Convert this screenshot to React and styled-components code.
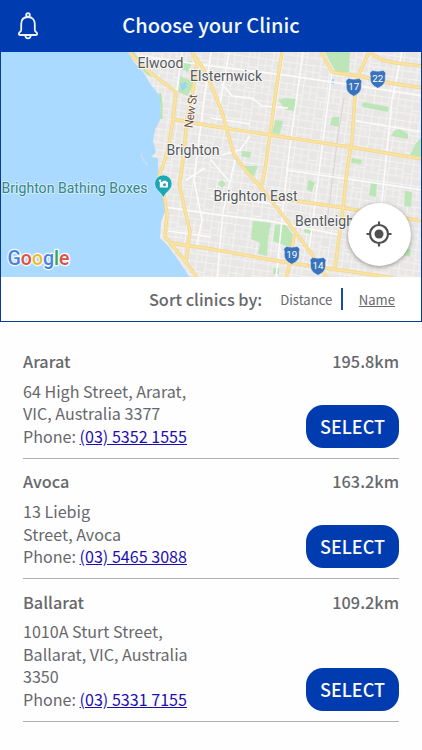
import styled, { createGlobalStyle } from 'styled-components';

const GlobalStyle = createGlobalStyle`
  body {
    background: #fefefe;
    margin: 0;
  }
  * {
    box-sizing: border-box;
  }
`;

const Page = styled.div`
  color: #67686c;
  display: flex;
  flex-direction: column;
  font-family: 'Noto Sans CJK SC', 'Noto Sans', sans-serif;
  height: 750px;
  overflow: hidden;
  width: 422px;
`;

const HeaderBar = styled.header`
  align-items: center;
  background: #003cb0;
  display: grid;
  flex: none;
  grid-template-columns: 55px 1fr 55px;
  height: 52px;
`;

const BellButton = styled.button`
  background: none;
  border: 0;
  color: #eef4ff;
  display: flex;
  justify-content: center;
  padding: 0;
`;

const Title = styled.h1`
  color: #f4f8ff;
  font-size: 20.1px;
  font-weight: 500;
  line-height: 50px;
  margin: 0;
  padding-bottom: 2px;
  text-align: center;
  white-space: nowrap;
`;

const MapPanel = styled.section`
  border: 1px solid #0a3a9c;
  border-top: 0;
  flex: none;
  height: 270px;
`;

const MapArea = styled.div`
  height: 225px;
  position: relative;
`;

const MapSvg = styled.svg`
  display: block;
  font-family: Roboto, sans-serif;
`;

const Label = styled.text`
  fill: ${({ $color }) => $color || '#55585b'};
  font-size: ${({ $size }) => $size || 14}px;
  paint-order: stroke;
  stroke: ${({ $halo }) => $halo || '#f8f8f8'};
  stroke-linejoin: round;
  stroke-width: 1.8px;
`;

const LocateButton = styled.button`
  align-items: center;
  background: #fff;
  border: 0;
  border-radius: 50%;
  bottom: 11px;
  box-shadow: 0 1px 4px rgba(0, 0, 0, 0.4);
  display: flex;
  height: 63px;
  justify-content: center;
  padding: 0 1px 1px 0;
  position: absolute;
  right: 10px;
  width: 63px;
`;

const SortBar = styled.div`
  align-items: center;
  background: #fff;
  display: flex;
  height: 44px;
  justify-content: flex-end;
  padding-right: 26px;
`;

const SortLabel = styled.span`
  font-size: 16.3px;
  font-weight: 500;
  margin-right: 18px;
`;

const SortOption = styled.a`
  font-size: 13.1px;
  padding-top: 1px;
  text-decoration: ${({ $active }) => ($active ? 'underline' : 'none')};
`;

const SortDivider = styled.span`
  background: #1c49a4;
  height: 22px;
  margin: 0 16px 0 9px;
  width: 1.5px;
`;

const ClinicList = styled.main`
  padding: 16.4px 23px 0;
`;

const Clinic = styled.article`
  border-bottom: 1px solid #b0b0b0;
  padding: 11.8px 0 10px;
`;

const ClinicHead = styled.div`
  display: flex;
  font-size: 16.3px;
  font-weight: 500;
  justify-content: space-between;
  line-height: 22.6px;
  margin-bottom: 7px;
`;

const ClinicBody = styled.div`
  align-items: flex-end;
  display: flex;
  justify-content: space-between;
`;

const Address = styled.div`
  font-size: 16.1px;
  line-height: 22.6px;
  white-space: nowrap;
`;

const PhoneLink = styled.a`
  color: #1b0fb0;
  text-decoration: underline;
`;

const SelectButton = styled.button`
  background: #003cb0;
  border: 0;
  border-radius: 17px;
  color: #fff;
  font-family: inherit;
  font-size: 18px;
  font-weight: 500;
  height: 43px;
  line-height: 42px;
  padding: 0 0 1px;
  width: 93px;
`;

const clinics = [
  { name: 'Ararat', distance: '195.8km', address: ['64 High Street, Ararat,', 'VIC, Australia 3377'], phone: '(03) 5352 1555' },
  { name: 'Avoca', distance: '163.2km', address: ['13 Liebig', 'Street, Avoca'], phone: '(03) 5465 3088' },
  { name: 'Ballarat', distance: '109.2km', address: ['1010A Sturt Street,', 'Ballarat, VIC, Australia', '3350'], phone: '(03) 5331 7155' },
];

const mainRoads = [
  'M130 53L138 62L152 74L176 92L173 120L168 150L163 165L159 176L165 200L167 215L165 236L171 244L186 262L198 279',
  'M192 52L197 63L194 85L187 118L183 160L179.500 185L184 206L190 232L186 262',
  'M192 52L203 68L211 85L222 112L227 130L234 155L247 172L263 190L281 213L311 253L328 279',
  'M172 119L211 126L270 135L350 147L422 159',
  'M282 52L276 90L270 135L265 170L261 188',
  'M321 52L332 72L358 76L390 83L422 88',
  'M369 52L358 76L355 95L352 140L347 170L343 208L335 268',
  'M369 52L382 60L396 63L422 66',
  'M275 196L298 201L344 208L380 214L422 221',
  'M171 243L211 249L250 256L290 263L340 270L394 278',
  'M294 235L290 263L286 278',
];

const whiteRoads = [
  'M140 56L211 66L285 75L345 84L422 96',
  'M182 52L177 90L173 120',
  'M303 52L297 95L290 145L284 200L276 278',
  'M332 72L325 125L318 180L309 250',
  'M402 52L392 100L386 160L378 240',
  'M222 84L232 96L252 98L262 106L288 108',
  'M211 118L250 124M211 196L281 205',
  'M165 207L211 214L270 221L340 235',
  'M168 231L211 237M229 52L219 110',
  'M211 52L204 100L194 180L202 220L196 249',
  'M222 155L240 150L250 136M211 160L229 181',
  'M217 278L223 212L235 160M186 180L205 168',
  'M356 121L422 132M286 170L422 190',
];

const parks = [
  'M128 52L134 52L145 67L152 78L145 73Z',
  'M180 76L194 82L188 96L178 92Z',
  'M182 62L192 61L188 72L179 68Z',
  'M325 52L350 52L349 72L336 72L330 62Z',
  'M278 100L286 98L297 99L295 111L286 110Z',
  'M275 120L283 121L280 134L272 133Z',
  'M332 117L339 117L339 127L330 125Z',
  'M363 102L389 107L388 112L362 107Z',
  'M394 131L400 129L408 134L408 139L391 136Z',
  'M416 143L422 137L422 157L410 155Z',
  'M352 158L362 160L361 164L351 163Z',
  'M242 151L251 152L250 158L241 156Z',
  'M243 166L258 166L254 176L248 173Z',
  'M222 180L226 184L222 188L218 184Z',
  'M308 180L315 182L312 192L307 190Z',
  'M371 182L377 183L376 197L369 195Z',
  'M405 191L412 192L411 207L404 206Z',
  'M253 221L271 223L268 239L267 256L258 254L260 243L251 239Z',
  'M275 225L285 224L294 236L291 248L273 241Z',
  'M305 227L313 228L311 234L304 232Z',
  'M273 268L279 268L279 274L273 274Z',
  'M405 248L411 249L410 257L404 255Z',
];

const shields = [
  { x: 353.8, y: 87, text: '17' },
  { x: 377.8, y: 79, text: '22' },
  { x: 291.8, y: 255, text: '19' },
  { x: 318, y: 266, text: '14' },
];

function BellIcon() {
  return (
    <svg width="20" height="28" viewBox="0 0 20 28" fill="none" stroke="currentColor" strokeWidth="1.8" strokeLinejoin="round">
      <circle cx="10" cy="2.900" r="1.800" />
      <path d="M10 5C5.500 5 3.200 8 3.200 12V18C3.200 19.300 2.600 19.800 1.500 20.400C.5 21.100.7 23 1.900 23H18.100C19.300 23 19.500 21.100 18.500 20.400C17.400 19.800 16.800 19.300 16.800 18V12C16.800 8 14.500 5 10 5Z" />
      <path d="M7.300 23.200C7.400 25.200 8.400 26.300 10 26.300S12.600 25.200 12.700 23.200" />
    </svg>
  );
}

function Shield({ x, y, text }) {
  return (
    <g transform={`translate(${x} ${y})`}>
      <path d="M-5.500-8.500Q0-7 5.500-8.500L8-6Q7-3 7.500 0Q7.500 6 0 9.200Q-7.500 6-7.500 0Q-7-3-8-6Z" fill="#3973bd" stroke="#dce6f2" strokeWidth=".5" />
      <text y="3.300" textAnchor="middle" fontSize="9.800" fill="#fff">{text}</text>
    </g>
  );
}

function ClinicMap() {
  return (
    <MapSvg width="420" height="225" viewBox="1 52 420 225">
      <defs>
        <pattern id="streets" width="24" height="21" patternUnits="userSpaceOnUse" patternTransform="rotate(8)">
          <path d="M0 .5H24M0 7H15M0 14H24M15 10.500H24M.5 0V21M8 0V14M15 0V21M20 14V21" stroke="#f6f6f5" strokeWidth=".8" fill="none" />
        </pattern>
      </defs>
      <rect x="0" y="52" width="422" height="226" fill="#e8e7e5" />
      <rect x="0" y="52" width="422" height="226" fill="url(#streets)" />
      {parks.map((d) => <path key={d} d={d} fill="#bce6b8" />)}
      <path d="M180 84L186 82L187 87L182 91Z" fill="#9fd3f5" />
      <path d="M331 79h3v5h-3z" fill="#a9d0f5" />
      <path d="M338 135L326 230M344 98L338 135" stroke="#d6d6d8" strokeWidth="1" fill="none" />
      <path d="M0 52H128L134 62L143 72L151 85L160 96L161 118L155 130L153 141L156 152L151 157L158 158L158 168L159 178L163 197L166 210L161 221L160 238L168 246L181 264L190 278H0Z" fill="#aadaff" />
      <path d="M141 153Q142 161 148 165" fill="none" stroke="#d6e5e9" strokeWidth="1" />
      <path d="M160 93L161.500 105V119" stroke="#b4e3b2" strokeWidth="2" fill="none" />
      <g fill="none" stroke="#fcfcfc" strokeWidth="1.500">
        {whiteRoads.map((d) => <path key={d} d={d} />)}
      </g>
      <g fill="none" stroke="#f3d689" strokeWidth="3.400" strokeLinejoin="round">
        {mainRoads.map((d) => <path key={d} d={d} />)}
      </g>
      <g fill="none" stroke="#fbe3a0" strokeWidth="2" strokeLinejoin="round">
        {mainRoads.map((d) => <path key={d} d={d} />)}
      </g>
      {shields.map((s) => <Shield key={s.text} {...s} />)}
      <Label x="137.500" y="68" textLength="46">Elwood</Label>
      <Label x="190" y="80.500" textLength="72">Elsternwick</Label>
      <Label x="166.500" y="155" textLength="53">Brighton</Label>
      <Label x="213.500" y="201" textLength="84">Brighton East</Label>
      <Label x="295" y="226" textLength="59">Bentleigh</Label>
      <Label $color="#705237" $size={12} transform="translate(192.500 128.500) rotate(-82)" textLength="34">New St</Label>
      <Label $color="#36858b" $halo="#d2edfa" x="1.500" y="192.500" textLength="146">Brighton Bathing Boxes</Label>
      <path d="M163.300 197.500Q161.500 194 157.300 190A8.700 8.700 0 1 1 169.300 190Q165 194 163.300 197.500Z" fill="#1ea7b3" stroke="#e9f5f5" strokeWidth=".6" />
      <path d="M160 182H162L163 180.800H166L167 182H168V187.500H159.800V184" fill="#fff" />
      <circle cx="164.500" cy="184.700" r="1.500" fill="#1ea7b3" />
      <circle cx="160" cy="180.800" r="1.200" fill="#fff" />
      <text x="7.500" y="264.500" fontSize="19.500" fontWeight="500" stroke="#f4faff" strokeWidth="2.500" strokeLinejoin="round" paintOrder="stroke">
        <tspan fill="#4a80e0">G</tspan>
        <tspan fill="#e0503f">o</tspan>
        <tspan fill="#eebb30">o</tspan>
        <tspan fill="#4a80e0">g</tspan>
        <tspan fill="#34a853">l</tspan>
        <tspan fill="#e0503f">e</tspan>
      </text>
    </MapSvg>
  );
}

export default function App() {
  return (
    <Page>
      <GlobalStyle />
      <HeaderBar>
        <BellButton aria-label="Notifications"><BellIcon /></BellButton>
        <Title>Choose your Clinic</Title>
      </HeaderBar>
      <MapPanel>
        <MapArea>
          <ClinicMap />
          <LocateButton aria-label="My location">
            <svg width="26" height="26" viewBox="0 0 26 26" fill="none" stroke="#505050" strokeWidth="2.2">
              <circle cx="13" cy="13" r="9" />
              <circle cx="13" cy="13" r="4.500" fill="#505050" stroke="none" />
              <path d="M13 .5V4M13 22V25.500M.5 13H4M22 13H25.500" />
            </svg>
          </LocateButton>
        </MapArea>
        <SortBar>
          <SortLabel>Sort clinics by:</SortLabel>
          <SortOption>Distance</SortOption>
          <SortDivider />
          <SortOption $active>Name</SortOption>
        </SortBar>
      </MapPanel>
      <ClinicList>
        {clinics.map((clinic) => (
          <Clinic key={clinic.name}>
            <ClinicHead>
              <span>{clinic.name}</span>
              <span>{clinic.distance}</span>
            </ClinicHead>
            <ClinicBody>
              <Address>
                {clinic.address.map((line) => <div key={line}>{line}</div>)}
                <div>Phone: <PhoneLink href={`tel:${clinic.phone}`}>{clinic.phone}</PhoneLink></div>
              </Address>
              <SelectButton>SELECT</SelectButton>
            </ClinicBody>
          </Clinic>
        ))}
      </ClinicList>
    </Page>
  );
}
